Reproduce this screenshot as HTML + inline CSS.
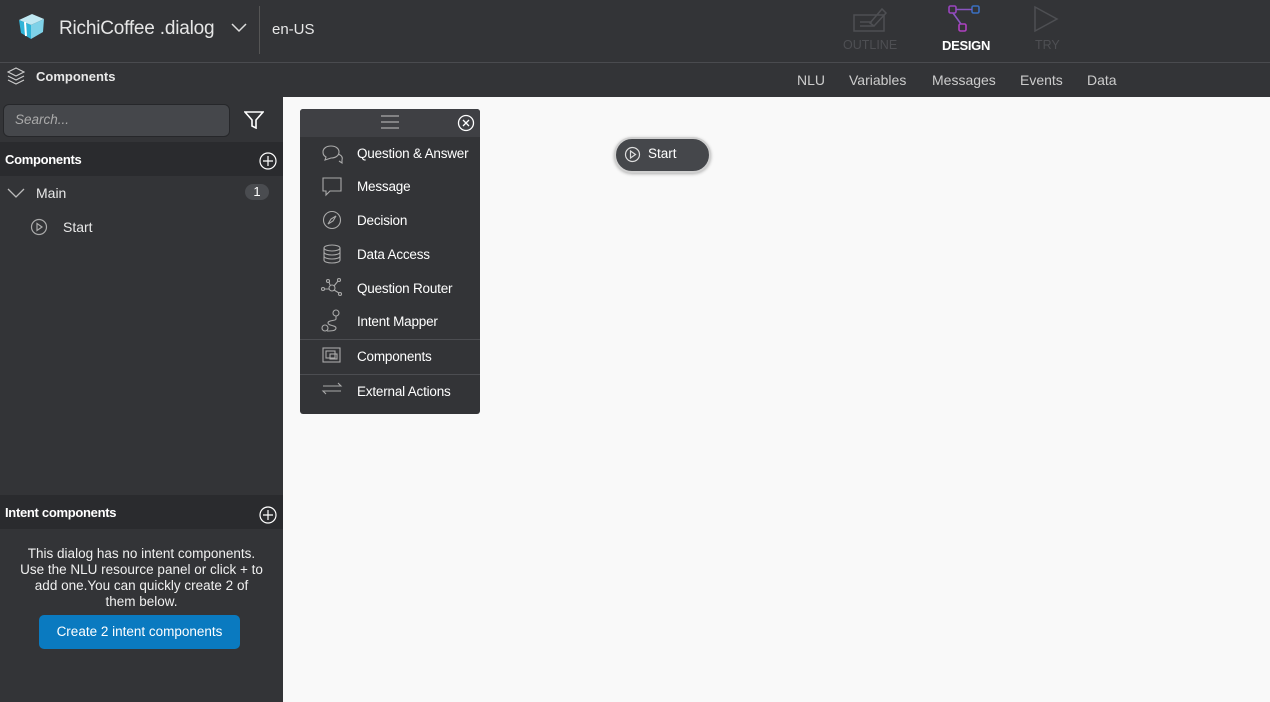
<!DOCTYPE html>
<html><head><style>
*{box-sizing:border-box;margin:0;padding:0}
body{width:1270px;height:702px;overflow:hidden;background:#f9f9f9;font-family:"Liberation Sans",sans-serif;color:#fff;position:relative}
.a{position:absolute}
.top{left:0;top:0;width:1270px;height:63px;background:#333437;border-bottom:1px solid #4a4b4f}
.sub{left:0;top:63px;width:1270px;height:34px;background:#333437}
.side{left:0;top:97px;width:283px;height:605px;background:#333437}
.t{font-size:14px;color:#e8e8e8;white-space:nowrap}
.hdr{left:0;width:283px;height:34px;background:#2a2b2e}
.menu{left:300px;top:109px;width:180px;height:305px;background:#333437;border-radius:3px}
.mi{left:357px;font-size:13.5px;color:#fff;white-space:nowrap;letter-spacing:-.2px}
</style></head><body>
<div class="a top"></div>
<div class="a sub"></div>
<svg class="a" style="left:16px;top:11px" width="30" height="30" viewBox="0 0 30 30"><path d="M3 9 L16 3 L28 8 L15 14Z" fill="#bfe8f2"/><path d="M3 9 L15 14 L15 28 L5 22Z" fill="#2fb4d8"/><path d="M15 14 L28 8 L27 21 L15 28Z" fill="#7fd2e8"/><path d="M9 11 L10 25" stroke="#fff" stroke-width="2"/></svg>
<div class="a" style="left:59px;top:18px;font-size:19px;color:#e6e6e6;letter-spacing:-.2px">RichiCoffee .dialog</div>
<svg class="a" style="left:231px;top:23px" width="16" height="10"><path d="M1 1 L8 8 L15 1" stroke="#ddd" fill="none" stroke-width="1.5"/></svg>
<div class="a" style="left:259px;top:6px;width:1px;height:48px;background:#555"></div>
<div class="a t" style="left:272px;top:21px;font-size:15px">en-US</div>
<svg class="a" style="left:852px;top:5px" width="36" height="28"><rect x="2" y="10" width="30" height="16" fill="none" stroke="#4e4f53" stroke-width="1.5"/><path d="M8 17h12M8 21h14M18 18 L30 4 L34 8 L22 21Z" stroke="#4e4f53" fill="none" stroke-width="1.5"/></svg>
<div class="a" style="left:843px;top:38px;font-size:12.5px;color:#4e4f53">OUTLINE</div>
<svg class="a" style="left:947px;top:3px" width="36" height="30"><rect x="2" y="3" width="7" height="7" rx="1.5" fill="none" stroke="#9b44c0" stroke-width="1.6"/><rect x="25" y="3" width="7" height="7" rx="1.5" fill="none" stroke="#3a6fc0" stroke-width="1.6"/><rect x="12" y="21" width="7" height="7" rx="1.5" fill="none" stroke="#b040c0" stroke-width="1.6"/><path d="M9 6.5h16M6 10 L14 21" stroke="#8a55c0" stroke-width="1.6" fill="none"/></svg>
<div class="a" style="left:942px;top:38px;font-size:13px;color:#fff;font-weight:bold;letter-spacing:-.3px">DESIGN</div>
<svg class="a" style="left:1033px;top:5px" width="26" height="28"><path d="M2 2 L24 14 L2 26Z" fill="none" stroke="#4e4f53" stroke-width="1.5"/></svg>
<div class="a" style="left:1035px;top:38px;font-size:12.5px;color:#4e4f53">TRY</div>
<svg class="a" style="left:7px;top:67px" width="18" height="18" viewBox="0 0 18 18" fill="none" stroke="#ccc" stroke-width="1.2"><path d="M9 1 L17 5 L9 9 L1 5Z"/><path d="M1 9 L9 13 L17 9"/><path d="M1 13 L9 17 L17 13"/></svg>
<div class="a t" style="left:36px;top:69px;font-size:13px;font-weight:bold">Components</div>
<div class="a t" style="left:797px;top:72px;color:#ccc">NLU</div>
<div class="a t" style="left:849px;top:72px;color:#ccc">Variables</div>
<div class="a t" style="left:932px;top:72px;color:#ccc">Messages</div>
<div class="a t" style="left:1020px;top:72px;color:#ccc">Events</div>
<div class="a t" style="left:1087px;top:72px;color:#ccc">Data</div>
<div class="a side"></div>
<div class="a" style="left:3px;top:104px;width:227px;height:33px;background:#45474b;border:1px solid #26272a;border-radius:6px"></div>
<div class="a" style="left:15px;top:112px;font-size:13.5px;font-style:italic;color:#aaa">Search...</div>
<svg class="a" style="left:244px;top:111px" width="20" height="18"><path d="M1 1 H19 L12 9 V17 L8 15 V9Z" fill="none" stroke="#fff" stroke-width="1.6"/></svg>
<div class="a hdr" style="top:142px"></div>
<div class="a" style="left:5px;top:152px;font-size:13px;font-weight:bold;letter-spacing:-.3px">Components</div>
<svg class="a" style="left:259px;top:152px" width="18" height="18"><circle cx="9" cy="9" r="8" fill="none" stroke="#fff" stroke-width="1.2"/><path d="M9 4v10M4 9h10" stroke="#fff" stroke-width="1.2"/></svg>
<svg class="a" style="left:7px;top:188px" width="18" height="10"><path d="M1 1 L9 9 L17 1" stroke="#bbb" fill="none" stroke-width="1.3"/></svg>
<div class="a t" style="left:36px;top:185px">Main</div>
<div class="a" style="left:245px;top:184px;width:24px;height:16px;border-radius:8px;background:#4a4c50;font-size:13px;text-align:center;line-height:16px">1</div>
<svg class="a" style="left:30px;top:218px" width="18" height="18"><circle cx="9" cy="9" r="7.5" fill="none" stroke="#aaa" stroke-width="1.2"/><path d="M7 5.5 L12 9 L7 12.5Z" fill="none" stroke="#aaa" stroke-width="1.2"/></svg>
<div class="a t" style="left:63px;top:219px">Start</div>
<div class="a hdr" style="top:495px"></div>
<div class="a" style="left:5px;top:505px;font-size:13px;font-weight:bold;letter-spacing:-.3px">Intent components</div>
<svg class="a" style="left:259px;top:506px" width="18" height="18"><circle cx="9" cy="9" r="8" fill="none" stroke="#fff" stroke-width="1.2"/><path d="M9 4v10M4 9h10" stroke="#fff" stroke-width="1.2"/></svg>
<div class="a" style="left:0;top:546px;width:283px;text-align:center;font-size:13.5px;line-height:16px;color:#f0f0f0">This dialog has no intent components.<br>Use the NLU resource panel or click + to<br>add one.You can quickly create 2 of<br>them below.</div>
<div class="a" style="left:39px;top:615px;width:201px;height:34px;background:#0a7ac0;border-radius:5px;text-align:center;line-height:34px;font-size:13.5px">Create 2 intent components</div>
<div class="a menu"></div>
<div class="a" style="left:300px;top:109px;width:180px;height:28px;background:#3f4044;border-radius:3px 3px 0 0"></div>
<svg class="a" style="left:381px;top:115px" width="18" height="14"><path d="M0 1h18M0 7h18M0 13h18" stroke="#aaa" stroke-width="1.2"/></svg>
<svg class="a" style="left:457px;top:114px" width="18" height="18"><circle cx="9" cy="9" r="7.5" fill="none" stroke="#fff" stroke-width="1.3"/><path d="M6 6l6 6M12 6l-6 6" stroke="#fff" stroke-width="1.3"/></svg>
<div class="a" style="left:300px;top:339px;width:180px;height:1px;background:#4c4d51"></div>
<div class="a" style="left:300px;top:374px;width:180px;height:1px;background:#4c4d51"></div>
<svg class="a" style="left:320px;top:143px" width="24" height="260" fill="none" stroke="#aaa" stroke-width="1.1">
<path d="M3 9c0-4 4-6 8-6s8 2 8 6-4 6-8 6l-6 2 1-3c-2-1-3-3-3-5z"/><path d="M18 11c3 1 5 3 4 6l0 3-3-2"/>
<path d="M3 35h18v13H10l-4 4v-4H3z"/>
<circle cx="12" cy="77" r="8.5"/><path d="M8 81l3-5 5-3-3 5z"/>
<ellipse cx="12" cy="105" rx="8" ry="3"/><path d="M4 105v12c0 2 4 3 8 3s8-1 8-3v-12M4 109c0 2 4 3 8 3s8-1 8-3M4 113c0 2 4 3 8 3s8-1 8-3"/>
<circle cx="3" cy="146" r="1.5"/><circle cx="12" cy="145" r="3"/><circle cx="8" cy="138" r="1.5"/><circle cx="19" cy="137" r="1.5"/><circle cx="20" cy="151" r="1.5"/><path d="M5 146h4M10 142l-1-3M14 143l4-5M14 147l5 3"/>
<circle cx="16" cy="170" r="3"/><path d="M16 173v3c0 2-8 1-8 4s8 2 8 5-5 3-9 3"/><circle cx="5" cy="185" r="3"/>
<rect x="3" y="205" width="17" height="14"/><rect x="6" y="208" width="9" height="7"/><rect x="10" y="211" width="7" height="5"/>
<path d="M3 243h18l-3-3M21 248H3l3 3"/>
</svg>
<div class="a mi" style="top:146px">Question &amp; Answer</div>
<div class="a mi" style="top:179px">Message</div>
<div class="a mi" style="top:213px">Decision</div>
<div class="a mi" style="top:247px">Data Access</div>
<div class="a mi" style="top:281px">Question Router</div>
<div class="a mi" style="top:314px">Intent Mapper</div>
<div class="a mi" style="top:349px">Components</div>
<div class="a mi" style="top:384px">External Actions</div>
<div class="a" style="left:614px;top:137px;width:97px;height:36px;background:#45474b;border:2px solid #d0d0d0;border-radius:18px;box-shadow:0 1px 3px rgba(0,0,0,.3)"></div>
<svg class="a" style="left:624px;top:146px" width="17" height="17"><circle cx="8.5" cy="8.5" r="7" fill="none" stroke="#ddd" stroke-width="1.2"/><path d="M6.5 5l5 3.5-5 3.5z" fill="none" stroke="#ddd" stroke-width="1.2"/></svg>
<div class="a" style="left:648px;top:146px;font-size:13.5px">Start</div>
</body></html>
